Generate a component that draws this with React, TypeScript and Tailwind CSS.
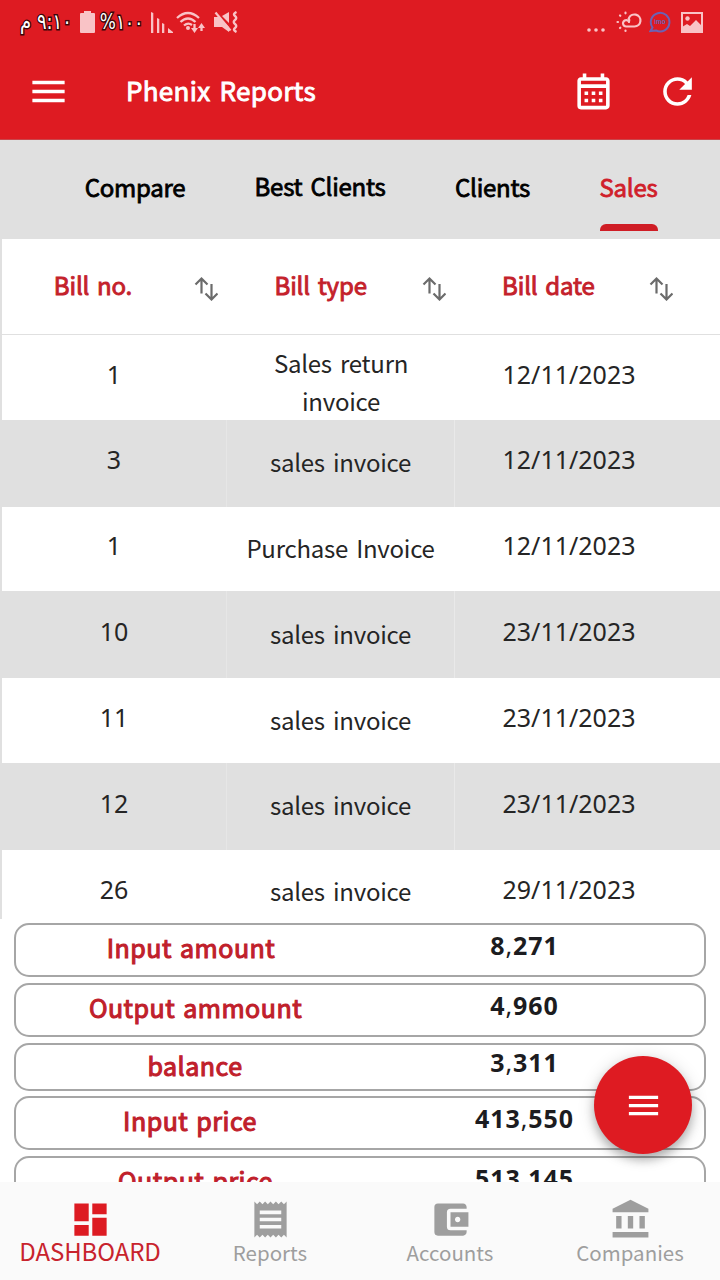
import type { ReactNode } from "react";
import {
  MdAccountBalance,
  MdAccountBalanceWallet,
  MdDashboard,
  MdMenu,
  MdOutlineCalendarMonth,
  MdReceipt,
  MdRefresh,
} from "react-icons/md";

const bills = [
  { no: "1", type: "Sales return invoice", date: "12/11/2023" },
  { no: "3", type: "sales invoice", date: "12/11/2023" },
  { no: "1", type: "Purchase Invoice", date: "12/11/2023" },
  { no: "10", type: "sales invoice", date: "23/11/2023" },
  { no: "11", type: "sales invoice", date: "23/11/2023" },
  { no: "12", type: "sales invoice", date: "23/11/2023" },
  { no: "26", type: "sales invoice", date: "29/11/2023" },
];

const totals = [
  { label: "Input amount", value: "8,271", box: "h-[54px] mb-[6px]", labelPad: "pt-[4px]", valuePad: "pt-[2px]" },
  { label: "Output ammount", value: "4,960", box: "h-[54px] mb-[6px]", labelPad: "pt-[4px] pl-[9px]", valuePad: "pt-[2px]" },
  { label: "balance", value: "3,311", box: "h-[48px] mb-[5px]", labelPad: "pt-[2px] pl-[8px]", valuePad: "-mt-px" },
  { label: "Input price", value: "413,550", box: "h-[54px] mb-[6px]", labelPad: "pt-[4px] pr-[2px]", valuePad: "pt-[2px]" },
  { label: "Output price", value: "513,145", box: "h-[54px]", labelPad: "pt-[4px] pl-[9px]", valuePad: "pt-[2px]" },
];

function StatusBar() {
  return (
    <div className="flex h-11 items-center justify-between pr-[17px] pl-[20px] text-[#f9c3c6]">
      <div className="flex items-center">
        <span
          dir="rtl"
          className="w-[52px] scale-y-[1.2] text-center font-['DejaVu_Sans',sans-serif] text-[18px] leading-[24px] whitespace-nowrap text-white [-webkit-text-stroke:2.400px_#3a0508] [paint-order:stroke_fill]"
        >
          ٩:١٠ م
        </span>
        <svg className="ml-[8px] h-[22px] w-[15px]" viewBox="0 0 15 22" fill="currentColor">
          <path d="M4 0h7v2h3q1 0 1 1v18q0 1-1 1H1q-1 0-1-1V3q0-1 1-1h3z" />
        </svg>
        <span className="ml-[6px] flex w-[41px] scale-y-[1.2] justify-center font-['DejaVu_Sans',sans-serif] text-[17px] leading-[24px] tracking-[-0.500px] whitespace-nowrap text-white [-webkit-text-stroke:2.400px_#3a0508] [paint-order:stroke_fill]">
          %١٠٠
        </span>
        <svg className="ml-[9px] h-[22px] w-[22px]" viewBox="0 0 22 22" fill="currentColor">
          <path d="M0 1l2.300 1v20H0zM6 7l2.300 1v14H6zM11 12l2.300 1v9H11zM17 17l5 4v1h-5z" />
        </svg>
        <svg className="ml-[3px] h-[23px] w-[29px]" viewBox="0 0 29 23" fill="none" stroke="currentColor" strokeWidth="2.300">
          <path d="M1 7Q12-3 23 7M4.500 11Q12 4 19.500 11M8 14.500Q12 11 16 14" />
          <path d="M18.500 13v7M25.500 20v-6" />
          <path d="M15 17h7l-3.500 5zM22 17h7l-3.500-5z" fill="currentColor" stroke="none" />
          <circle cx="12" cy="17" r="2" fill="currentColor" stroke="none" />
        </svg>
        <svg className="ml-[9px] h-[22px] w-[24px]" viewBox="0 0 24 22" fill="currentColor">
          <path d="M0 6h5l10 10v5L8 16H0zM8 5l7-4v11z" />
          <path d="M1.500 1.500l15 18" stroke="currentColor" strokeWidth="2.200" />
          <path d="M22.500 1q-4 2-1.500 4t0 4 0 4 0 4 1.500 4" fill="none" stroke="currentColor" strokeWidth="2.400" />
        </svg>
      </div>
      <div className="flex items-center">
        <svg className="h-[22px] w-[20px]" viewBox="0 0 20 22" fill="currentColor">
          <circle cx="4" cy="19" r="1.800" />
          <circle cx="11" cy="19" r="1.800" />
          <circle cx="18" cy="19" r="1.800" />
        </svg>
        <svg className="ml-[11px] h-[22px] w-[26px]" viewBox="0 0 26 22" fill="none" stroke="currentColor" strokeWidth="2.200" strokeLinecap="round">
          <path d="M13 10.800a3.200 3.200 0 1 0-3 4.700h8.500a6 6 0 1 0-5.700-8" />
          <path d="M12.800 7.500Q14 9.500 13 10.800" />
          <path d="M9.500 1.700v.6M4 4.500l.3.300M1.500 11h.5M4 17l.3-.3M9.500 19.500v.5" />
        </svg>
        <svg className="ml-[7px] h-[22px] w-[22px]" viewBox="0 0 22 22" fill="none" stroke="#6c62b4" strokeWidth="2">
          <path d="M3.500 16.500A9.300 9.300 0 1 1 7 19.500l-5.500.5z" />
          <text x="11" y="13.200" textAnchor="middle" fontSize="6.500" fontWeight="700" fontFamily="Liberation Sans, sans-serif" fill="#6c62b4" stroke="none">imo</text>
        </svg>
        <svg className="ml-[10px] h-[21px] w-[22px]" viewBox="0 0 22 21">
          <rect x="1" y="1" width="20" height="19" fill="none" stroke="currentColor" strokeWidth="2" />
          <circle cx="6.500" cy="6.500" r="2.200" fill="currentColor" />
          <path d="M1 15l5-3 3 2 6-6 6 6v6H1z" fill="currentColor" />
        </svg>
      </div>
    </div>
  );
}

function SortIcon() {
  return (
    <svg className="h-[26px] w-[24px] shrink-0" viewBox="0 0 24 26" fill="none" stroke="#6b6b6b" strokeWidth="2.200">
      <path d="M7.500 18.500V3M1.500 9.500l6-6 6 6M17.500 9v15M11.500 18.500l6 6 6-6" />
    </svg>
  );
}

function HeaderCell({ children }: { children: ReactNode }) {
  return (
    <div className="flex h-full w-[227.700px] items-center">
      <div className="w-[186px] pb-[4px] text-center text-[24px] leading-[36px] tracking-[-0.150px] whitespace-nowrap text-[#c4212b] [word-spacing:2.500px] [-webkit-text-stroke:0.900px_currentColor]">
        {children}
      </div>
      <div className="ml-[8px] pt-[2px]">
        <SortIcon />
      </div>
    </div>
  );
}

function NavItem({ icon, label, active }: { icon: ReactNode; label: string; active?: boolean }) {
  return (
    <div className={active ? "flex w-[180px] flex-col items-center text-[#dd1b22]" : "flex w-[180px] flex-col items-center text-[#9e9e9e]"}>
      {icon}
      <span
        className={
          active
            ? "-mt-[2px] text-[24px] leading-[24px] tracking-[-0.100px] text-[#c8232d]"
            : "-mt-px text-[20.500px] leading-[24px]"
        }
      >
        {label}
      </span>
    </div>
  );
}

export default function App() {
  return (
    <div className="relative flex h-[1280px] w-[720px] flex-col overflow-hidden bg-white font-['Noto_Sans_CJK_JP',sans-serif] text-[#212121]">
      <header className="h-[140px] shrink-0 border-b border-[#c9464b] bg-[#de1b22] text-white">
        <StatusBar />
        <div className="flex h-[95px] items-center pr-[21px] pl-[27px]">
          <MdMenu className="size-[43px]" />
          <h1 className="ml-[56px] flex-1 pb-[3px] text-[26px] leading-[36px] tracking-[0.300px] whitespace-nowrap [word-spacing:3px] [-webkit-text-stroke:0.900px_currentColor]">
            Phenix Reports
          </h1>
          <MdOutlineCalendarMonth className="size-[43px]" />
          <MdRefresh className="ml-[41px] size-[43px]" />
        </div>
      </header>

      <nav className="flex h-[99px] shrink-0 justify-end gap-[70px] bg-[#e0e0e0] pt-[29px] pr-[63px] text-[24px] leading-[36px] tracking-[-0.250px] whitespace-nowrap text-black [word-spacing:3px] [-webkit-text-stroke:0.800px_currentColor]">
        <div className="flex w-[100px] justify-center">Compare</div>
        <div className="-mt-px flex w-[130px] justify-center">Best Clients</div>
        <div className="flex w-[75px] justify-center">Clients</div>
        <div className="flex w-[57px] flex-col items-center text-[#d0202a]">
          Sales
          <span className="mt-[19px] h-[7px] w-[58px] rounded-t-[6px] bg-[#cf1d25]" />
        </div>
      </nav>

      <section className="flex h-[680px] shrink-0 flex-col overflow-hidden border-l-2 border-[#e0e0e0]">
        <div className="flex h-[96px] shrink-0 border-b-[1.500px] border-[#e0e0e0]">
          <div className="-ml-[2px] flex">
            <HeaderCell>Bill no.</HeaderCell>
            <HeaderCell>Bill type</HeaderCell>
            <HeaderCell>Bill date</HeaderCell>
          </div>
        </div>
        {bills.map((bill, i) => (
          <div
            key={i}
            className={
              i % 2
                ? "flex h-[87px] shrink-0 bg-[#e0e0e0] text-[#252525]"
                : "flex h-[84.660px] shrink-0 bg-white text-[#252525]"
            }
          >
            <div className="flex w-[225px] items-center justify-center border-r border-white/20 pb-[7.500px] font-['Noto_Sans',sans-serif] text-[25px] leading-[36px]">
              {bill.no}
            </div>
            <div
              className={
                i === 0
                  ? "flex w-[228px] items-center justify-center px-8 pt-[9px] text-center text-[24px] leading-[37.400px] tracking-[-0.250px] [word-spacing:3px]"
                  : "flex w-[228px] items-center justify-center border-r border-white/30 pb-[2px] text-[24px] leading-[36px] tracking-[-0.250px] whitespace-nowrap [word-spacing:3px]"
              }
            >
              {bill.type}
            </div>
            <div className="flex w-[228px] items-center justify-center pb-[7.500px] font-['Noto_Sans',sans-serif] text-[25px] leading-[36px]">
              {bill.date}
            </div>
          </div>
        ))}
      </section>

      <section className="flex h-[263px] shrink-0 flex-col overflow-hidden px-[14px] pt-[4px]">
        {totals.map((t) => (
          <div
            key={t.label}
            className={`${t.box} flex shrink-0 rounded-[15px] border-2 border-[#a6a6a6] text-[25px] leading-[36px]`}
          >
            <div
              className={`${t.labelPad} w-[350px] text-center tracking-[0.500px] whitespace-nowrap text-[#c0202b] [word-spacing:2px] [-webkit-text-stroke:1.100px_currentColor]`}
            >
              {t.label}
            </div>
            <div className={`${t.valuePad} w-[317px] text-center font-['Noto_Sans',sans-serif] font-bold tracking-[0.900px] text-[#1c1c20]`}>
              {t.value.split(",")[0]}
              <span className="font-normal">,</span>
              {t.value.split(",")[1]}
            </div>
          </div>
        ))}
      </section>

      <footer className="flex h-[98px] shrink-0 bg-[#fafafa] pt-[16px]">
        <NavItem active icon={<MdDashboard className="size-[43px]" />} label="DASHBOARD" />
        <NavItem icon={<MdReceipt className="size-[43px]" />} label="Reports" />
        <NavItem icon={<MdAccountBalanceWallet className="size-[43px]" />} label="Accounts" />
        <NavItem icon={<MdAccountBalance className="size-[43px]" />} label="Companies" />
      </footer>

      <button
        aria-label="Menu"
        className="absolute top-[1056px] left-[594px] flex size-[98px] items-center justify-center rounded-full bg-[#de1b22] text-white shadow-[0_6px_10px_rgba(0,0,0,0.25),0_2px_18px_rgba(0,0,0,0.14)]"
      >
        <MdMenu className="size-[39px]" />
      </button>
    </div>
  );
}
